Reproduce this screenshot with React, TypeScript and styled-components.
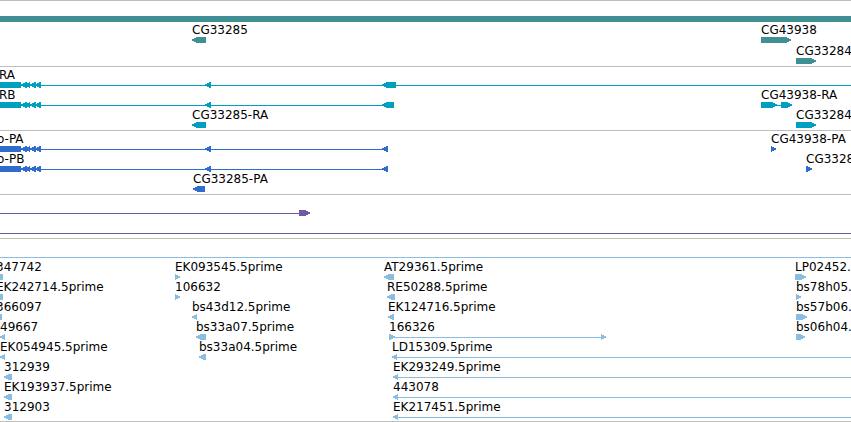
import React from "react";
import styled, { createGlobalStyle } from "styled-components";

type Direction = "left" | "right" | "none";

interface Exon {
  start: number;
  end: number;
  dir: Direction;
}

interface Feature {
  name?: string;
  start: number;
  // Draws the connecting intron line behind the exons.
  line?: boolean;
  // The feature continues past the right edge of the view.
  open?: boolean;
  exons: Exon[];
}

interface TrackData {
  id: string;
  title: string;
  color: string;
  gap?: "narrow" | "none";
  chromosome?: boolean;
  rows: Feature[][];
}

const GlobalStyle = createGlobalStyle`
  body {
    margin: 0;
    background: #fff;
  }
`;

const Browser = styled.main`
  display: flex;
  flex-direction: column;
  overflow: hidden;
  border-bottom: 1px solid #bebebe;
  font-family: "DejaVu Sans", sans-serif;
  font-size: 12px;
  line-height: 14px;
  color: #000;
`;

const Track = styled.section<{ $color: string; $gap: "narrow" | "none" }>`
  --feature: ${(p) => p.$color};
  display: flex;
  flex-direction: column;
  gap: ${(p) => (p.$gap === "narrow" ? "1px" : "0")};
  padding: 1px 0 2px;
  border-top: 1px solid #bebebe;

  &:last-child {
    padding-bottom: 1px;
  }
`;

const ChromosomeRow = styled.div`
  display: flex;
  align-items: flex-end;
  height: 20px;
`;

const ChromosomeBar = styled.div`
  flex: 1;
  height: 6px;
  background: var(--feature);
`;

const FeatureRow = styled.div`
  position: relative;
  height: 20px;
`;

const FeatureBox = styled.div<{ $start: number; $open: boolean }>`
  position: absolute;
  left: ${(p) => p.$start}px;
  ${(p) => p.$open && "right: 0;"}
  display: flex;
  flex-direction: column;
`;

const Label = styled.span`
  height: 14px;
  white-space: nowrap;
`;

const Glyph = styled.svg`
  display: block;
  overflow: visible;
  fill: var(--feature);
  shape-rendering: crispEdges;
`;

// Exons are six pixels tall; the pointed end narrows in one-pixel steps.
const outline = (from: number, to: number, dir: Direction) => {
  if (dir === "none") return `${from},0 ${to},0 ${to},6 ${from},6`;
  const tip = dir === "left" ? from : to;
  const tail = dir === "left" ? to : from;
  const step = dir === "left" ? 1 : -1;
  const points: [number, number][] = [
    [tip, 2],
    [tip + 2 * step, 2],
    [tip + 2 * step, 1],
    [tip + 4 * step, 1],
    [tip + 4 * step, 0],
    [tail, 0],
    [tail, 6],
    [tip + 4 * step, 6],
    [tip + 4 * step, 5],
    [tip + 2 * step, 5],
    [tip + 2 * step, 4],
    [tip, 4],
  ];
  return points.map((point) => point.join(",")).join(" ");
};

const block = (start: number, end: number): Exon => ({ start, end, dir: "none" });
const left = (start: number, end: number): Exon => ({ start, end, dir: "left" });
const right = (start: number, end: number): Exon => ({ start, end, dir: "right" });

const single = (name: string, exon: Exon): Feature => ({ name, start: exon.start, exons: [exon] });

const clustered: Exon[] = [
  block(-4, 21),
  left(21, 27),
  left(25, 30),
  left(30, 36),
  left(35, 41),
  left(205, 211),
];

const tracks: TrackData[] = [
  {
    id: "gene",
    title: "Genes",
    color: "#3f8f94",
    gap: "narrow",
    chromosome: true,
    rows: [
      [single("CG33285", left(192, 206)), single("CG43938", right(761, 791))],
      [single("CG33284", right(796, 816))],
    ],
  },
  {
    id: "transcript",
    title: "Transcripts",
    color: "#009ebf",
    rows: [
      [{ name: "RA", start: -1, line: true, open: true, exons: [...clustered, left(382, 396)] }],
      [
        { name: "RB", start: -1, line: true, exons: [...clustered, left(382, 394)] },
        { name: "CG43938-RA", start: 761, line: true, exons: [right(761, 777), right(781, 792)] },
      ],
      [single("CG33285-RA", left(192, 206)), single("CG33284-RA", right(796, 816))],
    ],
  },
  {
    id: "protein",
    title: "Proteins",
    color: "#306ccb",
    rows: [
      [
        { name: "o-PA", start: -3, line: true, exons: [...clustered, left(382, 388)] },
        single("CG43938-PA", right(771, 776)),
      ],
      [
        { name: "o-PB", start: -3, line: true, exons: [...clustered, left(382, 388)] },
        single("CG33284-PA", right(806, 812)),
      ],
      [single("CG33285-PA", left(193, 205))],
    ],
  },
  {
    id: "noncoding",
    title: "Non-coding",
    color: "#7358a8",
    rows: [
      [{ start: 0, line: true, exons: [right(299, 310)] }],
      [{ start: 0, line: true, open: true, exons: [] }],
    ],
  },
  {
    id: "est",
    title: "ESTs",
    color: "#8abde0",
    rows: [
      [{ start: 0, line: true, open: true, exons: [] }],
      [
        single("347742", block(-4, 3)),
        single("EK093545.5prime", right(175, 180)),
        single("AT29361.5prime", left(384, 394)),
        single("LP02452.5prime", right(795, 806)),
      ],
      [
        single("EK242714.5prime", block(-4, 3)),
        single("106632", right(175, 180)),
        single("RE50288.5prime", left(387, 395)),
        single("bs78h05.5prime", right(796, 801)),
      ],
      [
        single("366097", block(-4, 2)),
        single("bs43d12.5prime", left(192, 197)),
        single("EK124716.5prime", left(388, 394)),
        single("bs57b06.5prime", right(796, 807)),
      ],
      [
        single("49667", left(0, 5)),
        single("bs33a07.5prime", left(196, 206)),
        { name: "166326", start: 389, line: true, exons: [right(389, 395), right(601, 606)] },
        single("bs06h04.5prime", right(796, 805)),
      ],
      [
        single("EK054945.5prime", left(0, 5)),
        single("bs33a04.5prime", left(199, 206)),
        { name: "LD15309.5prime", start: 392, line: true, open: true, exons: [left(392, 397)] },
      ],
      [
        single("312939", left(4, 12)),
        { name: "EK293249.5prime", start: 393, line: true, open: true, exons: [left(393, 398)] },
      ],
      [
        single("EK193937.5prime", left(4, 12)),
        { name: "443078", start: 393, line: true, open: true, exons: [left(393, 398)] },
      ],
      [
        single("312903", left(4, 12)),
        { name: "EK217451.5prime", start: 393, line: true, open: true, exons: [left(393, 398)] },
      ],
    ],
  },
];

function FeatureView({ feature }: { feature: Feature }) {
  const { name, start, line, open = false, exons } = feature;
  const span = Math.max(0, ...exons.map((exon) => exon.end - start));
  return (
    <FeatureBox $start={start} $open={open}>
      <Label>{name}</Label>
      <Glyph width={open ? "100%" : span} height={6} aria-hidden="true">
        {line && <rect x={0} y={3} width={open ? "100%" : span - 1} height={1} />}
        {exons.map((exon) => (
          <polygon key={exon.start} points={outline(exon.start - start, exon.end - start, exon.dir)} />
        ))}
      </Glyph>
    </FeatureBox>
  );
}

export default function App() {
  return (
    <>
      <GlobalStyle />
      <Browser>
        {tracks.map((track) => (
          <Track key={track.id} aria-label={track.title} $color={track.color} $gap={track.gap ?? "none"}>
            {track.chromosome && (
              <ChromosomeRow>
                <ChromosomeBar />
              </ChromosomeRow>
            )}
            {track.rows.map((features, r) => (
              <FeatureRow key={r}>
                {features.map((feature, f) => (
                  <FeatureView key={f} feature={feature} />
                ))}
              </FeatureRow>
            ))}
          </Track>
        ))}
      </Browser>
    </>
  );
}
